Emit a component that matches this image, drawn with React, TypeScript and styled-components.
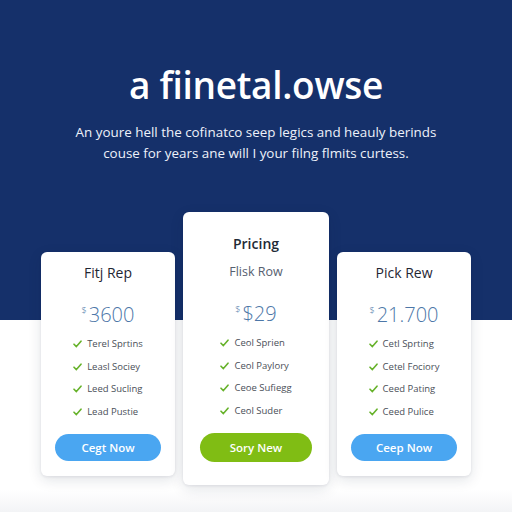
import React from 'react';
import styled, { createGlobalStyle } from 'styled-components';

const GlobalStyle = createGlobalStyle`
  html, body {
    margin: 0;
    padding: 0;
    background: #fff;
  }
  * { box-sizing: border-box; }
`;

/* ── Layout ── */

const Page = styled.div`
  width: 512px;
  height: 512px;
  overflow: hidden;
  font-family: 'Open Sans', 'Liberation Sans', sans-serif;
  background: linear-gradient(to bottom, #15306a 0, #15306a 320px, #ffffff 320px, #ffffff 490px, #f3f4f6 512px);
  display: flex;
  flex-direction: column;
  align-items: center;
`;

const Hero = styled.header`
  display: flex;
  flex-direction: column;
  align-items: center;
  padding-top: 62px;
`;

const Title = styled.h1`
  margin: 0;
  font-size: 37px;
  font-weight: 600;
  color: #fff;
  letter-spacing: -0.3px;
  line-height: 46px;
`;

const Lead = styled.p`
  margin: 14px 0 0;
  font-size: 13.4px;
  line-height: 21px;
  color: #eef2fa;
  text-align: center;
`;

const CardRow = styled.div`
  display: flex;
  align-items: flex-start;
  gap: 8px;
  margin-top: 48px;
`;

const Card = styled.div<{ $featured?: boolean }>`
  width: ${({ $featured }) => ($featured ? '146px' : '134px')};
  margin-top: ${({ $featured }) => ($featured ? '0' : '40px')};
  padding: ${({ $featured }) => ($featured ? '22px 0 23px' : '11px 0 15px')};
  background: #fff;
  border-radius: 6px;
  box-shadow: 0 4px 14px rgba(20, 30, 60, 0.12), 0 1px 3px rgba(20, 30, 60, 0.08);
  display: flex;
  flex-direction: column;
  align-items: center;
`;

const Kicker = styled.div`
  font-size: 14px;
  font-weight: 600;
  color: #222a36;
  line-height: 20px;
  margin-bottom: 8px;
`;

const PlanName = styled.div<{ $muted?: boolean }>`
  font-size: ${({ $muted }) => ($muted ? '12.5px' : '14px')};
  font-weight: ${({ $muted }) => ($muted ? 400 : 500)};
  color: ${({ $muted }) => ($muted ? '#566070' : '#1f2633')};
  line-height: 20px;
`;

const Price = styled.div`
  margin-top: 21px;
  display: flex;
  align-items: flex-start;
  color: #4d77a8;
  font-weight: 300;
  font-size: 20px;
  line-height: 22px;
`;

const Currency = styled.span`
  font-size: 9px;
  line-height: 12px;
  margin-right: 2px;
  margin-top: 1px;
`;

const Features = styled.ul`
  list-style: none;
  margin: 11px 0 0;
  padding: 0;
  display: flex;
  flex-direction: column;
  gap: 8.5px;
`;

const Feature = styled.li`
  display: flex;
  align-items: center;
  gap: 5px;
  font-size: 9.5px;
  color: #4a4f58;
  line-height: 14px;
`;

const CTA = styled.button<{ $tone: 'blue' | 'green'; $wide?: boolean }>`
  margin-top: 15px;
  width: ${({ $wide }) => ($wide ? '112px' : '106px')};
  height: ${({ $wide }) => ($wide ? '29px' : '27px')};
  border: none;
  border-radius: 15px;
  background: ${({ $tone }) => ($tone === 'green' ? '#80bd14' : '#4aa6f1')};
  color: #fff;
  font-family: inherit;
  font-size: 11.5px;
  font-weight: 600;
  cursor: pointer;
`;

/* ── Parts ── */

const Check = () => (
  <svg width="9" height="8" viewBox="0 0 9 8">
    <path d="M1 4.2 L3.4 6.6 L8 1.2" fill="none" stroke="#66b22a" strokeWidth="1.6" strokeLinecap="round" strokeLinejoin="round" />
  </svg>
);

interface Plan {
  kicker?: string;
  name: string;
  price: string;
  features: string[];
  cta: string;
  tone: 'blue' | 'green';
  featured?: boolean;
}

const plans: Plan[] = [
  {
    name: 'Fitj Rep',
    price: '3600',
    features: ['Terel Sprtins', 'Leasl Sociey', 'Leed Sucling', 'Lead Pustie'],
    cta: 'Cegt Now',
    tone: 'blue',
  },
  {
    kicker: 'Pricing',
    name: 'Flisk Row',
    price: '$29',
    features: ['Ceol Sprien', 'Ceol Paylory', 'Ceoe Sufiegg', 'Ceol Suder'],
    cta: 'Sory New',
    tone: 'green',
    featured: true,
  },
  {
    name: 'Pick Rew',
    price: '21.700',
    features: ['Cetl Sprting', 'Cetel Fociory', 'Ceed Pating', 'Ceed Pulice'],
    cta: 'Ceep Now',
    tone: 'blue',
  },
];

const App: React.FC = () => (
  <>
    <GlobalStyle />
    <Page>
      <Hero>
        <Title>a fiinetal.owse</Title>
        <Lead>
          An youre hell the cofinatco seep legics and heauly berinds
          <br />
          couse for years ane will I your filng flmits curtess.
        </Lead>
      </Hero>

      <CardRow>
        {plans.map((plan) => (
          <Card key={plan.name} $featured={plan.featured}>
            {plan.kicker && <Kicker>{plan.kicker}</Kicker>}
            <PlanName $muted={plan.featured}>{plan.name}</PlanName>
            <Price>
              <Currency>$</Currency>
              {plan.price}
            </Price>
            <Features>
              {plan.features.map((f) => (
                <Feature key={f}>
                  <Check />
                  {f}
                </Feature>
              ))}
            </Features>
            <CTA $tone={plan.tone} $wide={plan.featured}>
              {plan.cta}
            </CTA>
          </Card>
        ))}
      </CardRow>
    </Page>
  </>
);

export default App;
